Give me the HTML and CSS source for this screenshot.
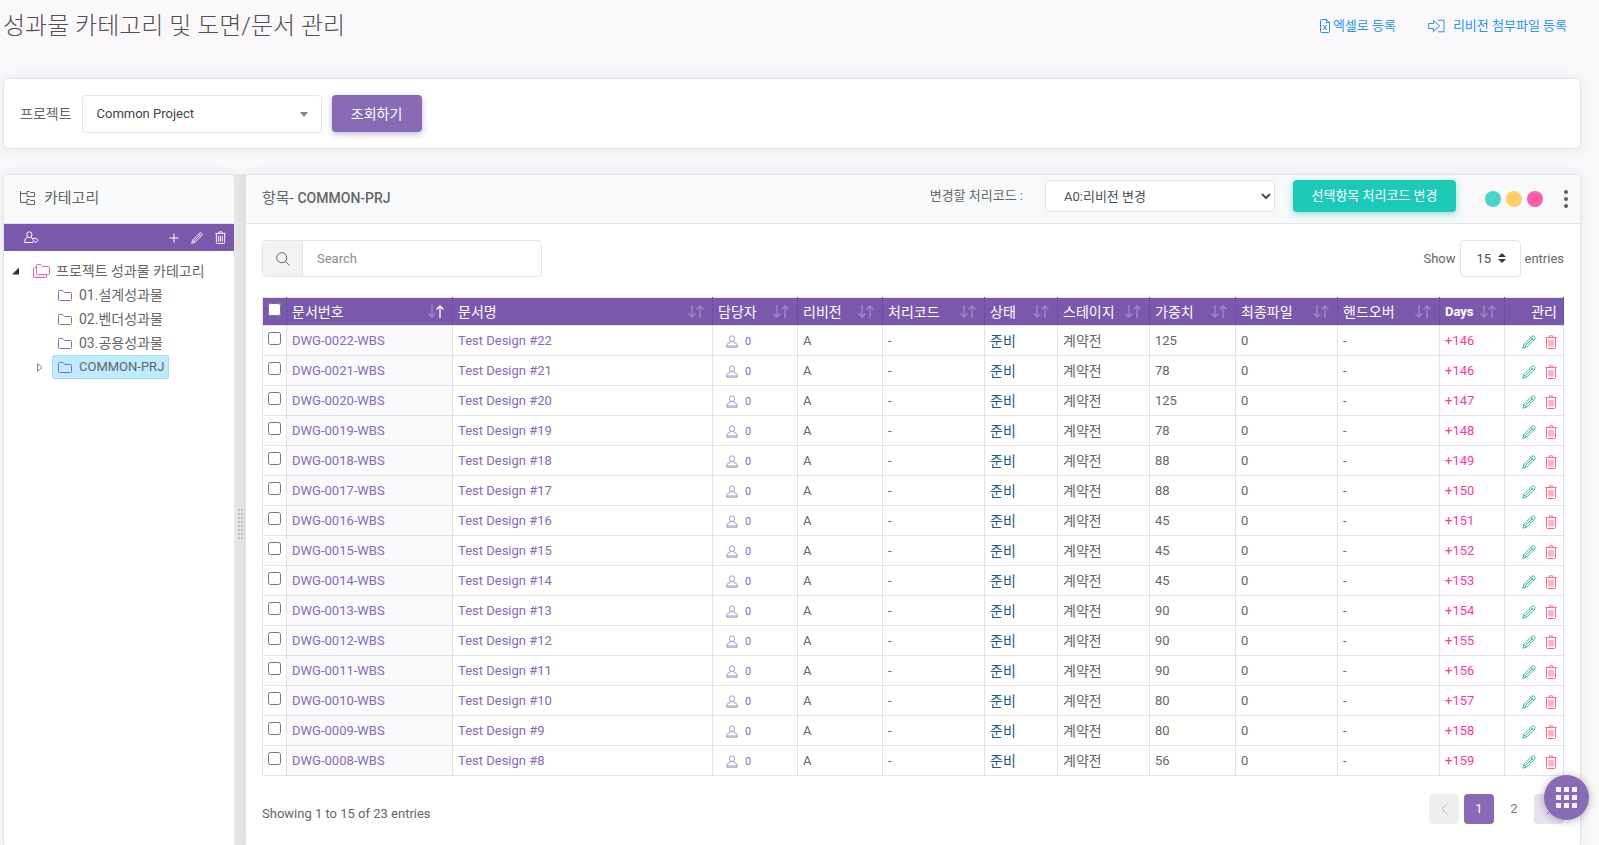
FILE: index.html
```html
<!DOCTYPE html>
<html lang="ko">
<head>
    <meta charset="UTF-8">
    <meta name="viewport" content="width=device-width, initial-scale=1.0">
    <title>성과물 카테고리 및 도면/문서 관리</title>
    <link rel="stylesheet" href="styles.css">
</head>
<body>
    <!-- Shared icons -->
    <svg class="sprite" aria-hidden="true">
        <symbol id="i-excel" viewBox="0 0 10 14"><path d="M1.5 .5H6.5L9.500 3.500V12.500Q9.500 13.500 8.500 13.500H1.500Q.5 13.500 .5 12.500V1.500Q.5 .5 1.500 .5ZM6.500 .5V3.500H9.500M3.300 6L6.700 11M6.700 6L3.300 11"/></symbol>
        <symbol id="i-import" viewBox="0 0 17 14"><path d="M.7 4.500H5.500V1.500L11.500 7L5.500 12.500V9.500H.7ZM10 1.200H16V12.800H10"/></symbol>
        <symbol id="i-tree" viewBox="0 0 16 16"><path d="M.5 1V12.500H7M.5 3.500H7M7 1.500H9.500L10.500 2.500H14.500V6.500H7ZM7 9.500H9.500L10.500 10.500H14.500V14.500H7Z"/></symbol>
        <symbol id="i-user" viewBox="0 0 12 13"><path d="M6 .8A2.600 2.900 0 0 1 6 6.600A2.600 2.900 0 0 1 6 .8ZM4.200 6L4 7.500L1.500 8.600Q.8 9.500 .8 11H11.200Q11.200 9.500 10.500 8.600L8 7.500L7.800 6M.8 11V12.200H11.200V11"/></symbol>
        <symbol id="i-user-tag" viewBox="0 0 15 13"><path d="M5.300 .8A2.600 2.900 0 0 1 5.300 6.600A2.600 2.900 0 0 1 5.300 .8ZM3.500 6.300L1.500 7.600Q.8 8.500 .8 11.500H9M7 6.500L8.500 7.300M8.500 7.300H12L14.200 9.300L12 11.500L9.500 10.300Z"/></symbol>
        <symbol id="i-plus" viewBox="0 0 10 10"><path d="M5 .5V9.500M.5 5H9.500"/></symbol>
        <symbol id="i-pencil" viewBox="0 0 14 14"><path d="M.8 13.200L1.800 9.500L10 1.300Q11.300 .3 12.500 1.500Q13.700 2.700 12.700 4L4.500 12.200ZM1.800 9.500L4.500 12.200M3.200 10.800L11 3M8.800 2.500L11.500 5.200"/></symbol>
        <symbol id="i-trash" viewBox="0 0 12 14"><path d="M.3 2.500H11.700M3.700 2.500L4.500 .8H7.500L8.300 2.500M1.500 2.500V12.500Q1.500 13.500 2.500 13.500H9.500Q10.500 13.500 10.500 12.500V2.500M4 5V11.500M6 5V11.500M8 5V11.500"/></symbol>
        <symbol id="i-folder" viewBox="0 0 14 11"><path d="M.5 1.500Q.5 .5 1.500 .5H4.800L6.500 2.500H12.500Q13.500 2.500 13.500 3.500V9.500Q13.500 10.500 12.500 10.500H1.500Q.5 10.500 .5 9.500Z"/></symbol>
        <symbol id="i-folders" viewBox="0 0 17 14"><path d="M3.500 1.500Q3.500 .5 4.500 .5H7.800L9.500 2.500H15.500Q16.500 2.500 16.500 3.500V9.500Q16.500 10.500 15.500 10.500H4.500Q3.500 10.500 3.500 9.500ZM3.500 3.500H1.500Q.5 3.500 .5 4.500V12.500Q.5 13.500 1.500 13.500H12.500Q13.500 13.500 13.500 12.500V10.500"/></symbol>
        <symbol id="i-search" viewBox="0 0 14 14"><circle cx="5.700" cy="5.700" r="5"/><path d="M9.300 9.300L13.500 13.500"/></symbol>
        <symbol id="i-down" viewBox="0 0 8 13"><path d="M4 0V12M.5 8.500L4 12L7.500 8.500"/></symbol>
        <symbol id="i-up" viewBox="0 0 8 13"><path d="M4 13V1M.5 4.500L4 1L7.500 4.500"/></symbol>
        <symbol id="i-left" viewBox="0 0 7 12"><path d="M6.500 .5L1 6L6.500 11.500"/></symbol>
        <symbol id="i-right" viewBox="0 0 7 12"><path d="M.5 .5L6 6L.5 11.500"/></symbol>
    </svg>

    <header class="page-header">
        <h1>성과물 카테고리 및 도면/문서 관리</h1>
        <nav class="page-links">
            <a href="#"><svg class="icon" width="10" height="14"><use href="#i-excel"/></svg>엑셀로 등록</a>
            <a href="#" class="wide"><svg class="icon" width="17" height="14"><use href="#i-import"/></svg>리비전 첨부파일 등록</a>
        </nav>
    </header>

    <form class="card filter">
        <label for="project">프로젝트</label>
        <span class="project-select">
            <select id="project"><option>Common Project</option></select>
        </span>
        <button type="button" class="btn btn-primary">조회하기</button>
    </form>

    <main class="panels">
        <section class="card category">
            <div class="card-head">
                <svg class="icon" width="16" height="16"><use href="#i-tree"/></svg>
                <h2>카테고리</h2>
            </div>
            <div class="toolbar">
                <button type="button" class="icon-btn first" aria-label="담당자 지정"><svg class="icon" width="15" height="13"><use href="#i-user-tag"/></svg></button>
                <button type="button" class="icon-btn" aria-label="추가"><svg class="icon" width="10" height="10"><use href="#i-plus"/></svg></button>
                <button type="button" class="icon-btn" aria-label="수정"><svg class="icon" width="12" height="12"><use href="#i-pencil"/></svg></button>
                <button type="button" class="icon-btn" aria-label="삭제"><svg class="icon" width="11" height="13"><use href="#i-trash"/></svg></button>
            </div>
            <ul class="tree">
                <li>
                    <div class="node root"><span class="arrow open"></span><a href="#"><svg class="icon" width="17" height="14"><use href="#i-folders"/></svg>프로젝트 성과물 카테고리</a></div>
                    <ul>
                        <li class="node"><a href="#"><svg class="icon" width="14" height="11"><use href="#i-folder"/></svg>01.설계성과물</a></li>
                        <li class="node"><a href="#"><svg class="icon" width="14" height="11"><use href="#i-folder"/></svg>02.벤더성과물</a></li>
                        <li class="node"><a href="#"><svg class="icon" width="14" height="11"><use href="#i-folder"/></svg>03.공용성과물</a></li>
                        <li class="node"><svg class="arrow closed" width="6" height="9" viewBox="0 0 6 9"><path d="M.5 .7L5 4.500L.5 8.300Z"/></svg><a href="#" class="selected"><svg class="icon" width="14" height="11"><use href="#i-folder"/></svg>COMMON-PRJ</a></li>
                    </ul>
                </li>
            </ul>
        </section>

        <div class="splitter"><span></span></div>

        <section class="card items">
            <div class="card-head">
                <h2>항목- <b>COMMON-PRJ</b></h2>
                <div class="head-tools">
                    <label for="code">변경할 처리코드 :</label>
                    <select id="code" class="code-select"><option>A0:리비전 변경</option></select>
                    <button type="button" class="btn btn-success">선택항목 처리코드 변경</button>
                    <span class="dots">
                        <button type="button" class="dot teal" aria-label="접기"></button>
                        <button type="button" class="dot yellow" aria-label="전체화면"></button>
                        <button type="button" class="dot pink" aria-label="닫기"></button>
                    </span>
                    <button type="button" class="kebab" aria-label="더보기"><i></i><i></i><i></i></button>
                </div>
            </div>
            <div class="card-body">
                <div class="table-tools">
                    <div class="search">
                        <label for="search" aria-label="Search"><svg class="icon" width="14" height="14"><use href="#i-search"/></svg></label>
                        <input type="text" id="search" placeholder="Search">
                    </div>
                    <div class="length">
                        <label for="length">Show</label>
                        <span class="length-select"><select id="length"><option>15</option></select></span>
                        entries
                    </div>
                </div>

                <table>
                    <colgroup>
                        <col class="c-check"><col class="c-no"><col><col class="c-user"><col class="c-user"><col class="c-mid">
                        <col class="c-state"><col class="c-stage"><col class="c-weight"><col class="c-mid"><col class="c-mid"><col class="c-days"><col class="c-act">
                    </colgroup>
                    <thead><tr id="heads"></tr></thead>
                    <tbody id="rows"></tbody>
                </table>

                <div class="table-foot">
                    <span>Showing 1 to 15 of 23 entries</span>
                    <nav class="pages">
                        <button type="button" disabled aria-label="이전"><svg class="icon" width="7" height="12"><use href="#i-left"/></svg></button>
                        <button type="button" class="active">1</button>
                        <button type="button">2</button>
                        <button type="button" class="next" aria-label="다음"><svg class="icon" width="7" height="12"><use href="#i-right"/></svg></button>
                    </nav>
                </div>
            </div>
        </section>
    </main>

    <button type="button" class="fab" aria-label="바로가기"><i></i><i></i><i></i><i></i><i></i><i></i><i></i><i></i><i></i></button>

    <script src="script.js"></script>
</body>
</html>
```

FILE: styles.css
```css
* {
    box-sizing: border-box;
}
body {
    display: flex;
    flex-direction: column;
    min-height: 100vh;
    margin: 0;
    padding: 0 18px 0 3px;
    background-color: #faf8fb;
    color: #666;
    font-family: Roboto, "Noto Sans CJK KR", sans-serif;
    font-size: 13px;
    line-height: 20px;
}
h1, h2, ul {
    margin: 0;
    padding: 0;
    font-weight: 400;
    list-style: none;
}
a {
    color: #886ab5;
    text-decoration: none;
}
button, input, select {
    font: inherit;
    color: inherit;
}
button {
    padding: 0;
    border: none;
    background: none;
    cursor: pointer;
}
.sprite {
    position: absolute;
    width: 0;
    height: 0;
}
.icon {
    flex: none;
    fill: none;
    stroke: currentColor;
    stroke-width: 1;
}

/* Page header */
.page-header {
    display: flex;
    justify-content: space-between;
    height: 78px;
    padding-top: 11px;
}
.page-header h1 {
    color: #505050;
    font-size: 24px;
    font-weight: 300;
    line-height: 30px;
}
.page-links {
    display: flex;
    gap: 32px;
    padding: 5px 14px 0 0;
    font-size: 13px;
}
.page-links a {
    display: flex;
    align-items: center;
    gap: 3px;
    height: 20px;
    color: #2196f3;
}
.page-links .wide {
    gap: 8px;
}

/* Cards */
.card {
    border: 1px solid #e5e4e7;
    border-radius: 4px;
    background-color: #fff;
    box-shadow: 0 0 13px rgba(74, 53, 107, 0.08);
}
.card-head {
    display: flex;
    align-items: center;
    height: 49px;
    padding: 0 16px 3px;
    border-bottom: 1px solid #e5e5e7;
    border-radius: 4px 4px 0 0;
    background-color: #f7f9fa;
}
.card-head h2 {
    font-size: 15px;
}
.card-head b {
    font-size: 14px;
    font-weight: 500;
}
.btn {
    border-radius: 4px;
    color: #fff;
}
.btn-primary {
    width: 90px;
    height: 37px;
    background-color: #886ab5;
    box-shadow: 0 2px 6px rgba(136, 106, 181, 0.5);
    font-size: 14px;
}
.btn-success {
    width: 163px;
    height: 32px;
    background-color: #1dc9b7;
    box-shadow: 0 2px 6px rgba(29, 201, 183, 0.5);
}

.filter {
    display: flex;
    align-items: center;
    height: 71px;
    margin-bottom: 25px;
    padding: 0 16px;
}
.filter label {
    font-size: 14px;
}
.project-select {
    position: relative;
    width: 240px;
    margin: 0 10px;
}
.project-select select {
    width: 100%;
    height: 38px;
    padding: 0 14px;
    border: 1px solid #e5e5e5;
    border-radius: 4px;
    background-color: #fff;
    color: #444;
    appearance: none;
}
.project-select::after {
    position: absolute;
    top: 17px;
    right: 14px;
    border: 4px solid transparent;
    border-top: 5px solid #888;
    border-bottom: none;
    content: "";
}

/* Category tree */
.panels {
    display: flex;
    flex: 1;
}
.panels .card {
    border-bottom: none;
    border-radius: 4px 4px 0 0;
}
.category {
    width: 231px;
    border-right: none;
}
.category .card-head {
    gap: 8px;
}
.toolbar {
    display: flex;
    align-items: center;
    gap: 12px;
    height: 27px;
    padding: 0 8px 0 20px;
    background-color: #7a59ad;
    color: #fff;
}
.icon-btn {
    display: flex;
    color: inherit;
}
.icon-btn.first {
    margin-right: auto;
}
.tree {
    padding: 8px 0 0 8px;
}
.tree ul {
    padding-left: 24px;
}
.node {
    display: flex;
    align-items: center;
    height: 24px;
    padding-left: 16px;
}
.node.root {
    padding-left: 0;
}
.node a {
    display: flex;
    align-items: center;
    gap: 7px;
    height: 24px;
    padding: 0 4px 0 5px;
    border: 1px solid transparent;
    color: #666;
    font-size: 14px;
}
.node a .icon {
    color: #886ab5;
}
.node.root a {
    gap: 6px;
    padding-left: 13px;
}
.node.root .icon {
    color: #fd5ca6;
}
.node a.selected {
    border-color: #a5dcf2;
    border-radius: 2px;
    background-color: #beebff;
    font-size: 13px;
}
.arrow.open {
    width: 7px;
    height: 7px;
    background-color: #333;
    clip-path: polygon(100% 0, 100% 100%, 0 100%);
}
.arrow.closed {
    margin: 0 9px 0 -15px;
    fill: none;
    stroke: #888;
}
.splitter {
    display: flex;
    align-items: center;
    justify-content: center;
    width: 12px;
    padding-top: 28px;
    background-color: #e6e6e6;
}
.splitter span {
    width: 5px;
    height: 30px;
    background-image: linear-gradient(to right, transparent 2px, #e6e6e6 2px, #e6e6e6 3px, transparent 3px), repeating-linear-gradient(#c4c4c4 0, #c4c4c4 2px, #e6e6e6 2px, #e6e6e6 4px);
}

/* Item panel */
.items {
    flex: 1;
    min-width: 0;
}
.panels .items {
    border-left: none;
}
.items .card-head {
    justify-content: space-between;
    padding: 0 8px 3px 16px;
}
.head-tools {
    display: flex;
    align-items: center;
    margin-top: -3px;
    font-size: 13px;
}
.head-tools label {
    margin-right: 22px;
}
.code-select {
    width: 230px;
    height: 32px;
    margin-right: 18px;
    padding-left: 14px;
    border: 1px solid #e5e5e5;
    border-radius: 4px;
    background-color: #fff;
    color: #495057;
}
.dots {
    display: flex;
    gap: 5px;
    margin: 6px 17px 0 29px;
}
.dot {
    width: 16px;
    height: 16px;
    border-radius: 50%;
}
.teal {
    background-color: #4ad4c5;
}
.yellow {
    background-color: #ffce65;
}
.pink {
    background-color: #fd5ca6;
}
.kebab {
    display: flex;
    flex-direction: column;
    gap: 3px;
    padding: 6px 4px 0;
}
.kebab i {
    width: 4px;
    height: 4px;
    border-radius: 50%;
    background-color: #5d5d5d;
}
.card-body {
    padding: 16px 16px 20px;
}
.table-tools {
    display: flex;
    justify-content: space-between;
    margin-bottom: 20px;
}
.search {
    display: flex;
    width: 280px;
    height: 37px;
    border: 1px solid #e5e5e5;
    border-radius: 4px;
}
.search label {
    display: flex;
    align-items: center;
    justify-content: center;
    width: 40px;
    border-right: 1px solid #e5e5e5;
    background-color: #f3f3f3;
}
.search input {
    flex: 1;
    min-width: 0;
    padding: 0 14px;
    border: none;
    border-radius: 4px;
    background: none;
}
.search input::placeholder {
    color: #868e96;
}
.length {
    display: flex;
    align-items: center;
    gap: 4px;
}
.length-select {
    position: relative;
}
.length-select select {
    width: 61px;
    height: 37px;
    padding: 0 16px;
    border: 1px solid #e5e5e5;
    border-radius: 4px;
    background-color: #fff;
    color: #495057;
    appearance: none;
}
.length-select::before, .length-select::after {
    position: absolute;
    right: 15px;
    border: 4px solid transparent;
    content: "";
}
.length-select::before {
    top: 13px;
    border-top: none;
    border-bottom-color: #343a40;
}
.length-select::after {
    top: 19px;
    border-bottom: none;
    border-top-color: #343a40;
}

/* Table */
table {
    width: 100%;
    border-collapse: collapse;
    table-layout: fixed;
}
.c-check { width: 24px; }
.c-no { width: 166px; }
.c-user { width: 85px; }
.c-mid { width: 102px; }
.c-state { width: 73px; }
.c-stage { width: 92px; }
.c-weight { width: 86px; }
.c-days { width: 65px; }
.c-act { width: 59px; }
th, td {
    height: 30px;
    padding: 0 5px;
    border: 1px solid #e3e3e5;
    text-align: left;
    white-space: nowrap;
}
th {
    height: 28px;
    border-color: #e3e3e5 #6e4e9e;
    background-color: #7a59ad;
    color: #fff;
    font-size: 14px;
    font-weight: 400;
}
th:first-child {
    border-left-color: #e3e3e5;
}
th div {
    display: flex;
    align-items: center;
    justify-content: space-between;
}
.sort {
    display: flex;
    padding-right: 3px;
    opacity: 0.3;
}
.sort.asc {
    opacity: 1;
}
.sort.asc .icon:first-child {
    opacity: 0.3;
}
.sort .icon {
    stroke-width: 1.3;
}
th:nth-child(12) {
    font-size: 13px;
    font-weight: 700;
}
th:last-child, td:last-child {
    padding-right: 6px;
    text-align: right;
}
th:last-child div {
    justify-content: flex-end;
}
td:nth-child(2) {
    background-color: #fafafc;
}
input[type="checkbox"] {
    display: block;
    width: 13px;
    height: 13px;
    margin: 0 0 4px;
}
.user {
    display: flex;
    align-items: center;
    gap: 7px;
    padding: 2px 0 0 8px;
    font-size: 11px;
}
.user .icon {
    opacity: 0.7;
}
.state, .stage {
    font-size: 14px;
}
.state {
    color: #1d5987;
}
.late {
    color: #fd3995;
}
.actions {
    display: flex;
    justify-content: flex-end;
    gap: 9px;
    padding-top: 2px;
}
.actions button {
    display: flex;
}
.edit {
    color: #37b8a8;
}
.remove {
    color: #fd6a86;
}

.table-foot {
    display: flex;
    align-items: flex-end;
    justify-content: space-between;
    margin-top: 18px;
}
.pages {
    display: flex;
    gap: 5px;
}
.pages button {
    display: flex;
    align-items: center;
    justify-content: center;
    width: 30px;
    height: 30px;
    border-radius: 4px;
    color: #886ab5;
}
.pages button:disabled {
    background-color: #eee;
    color: #bbb;
}
.pages .active {
    background-color: #886ab5;
    color: #fff;
}
.pages .next {
    background-color: #e7e1f0;
}

.fab {
    position: fixed;
    right: 10px;
    bottom: 25px;
    display: grid;
    grid-template-columns: repeat(3, 5px);
    gap: 3px;
    place-content: center;
    width: 45px;
    height: 45px;
    border-radius: 50%;
    background-color: #886ab5;
    box-shadow: 0 1px 8px rgba(0, 0, 0, 0.3);
}
.fab i {
    height: 5px;
    background-color: #f2eff6;
}
```

FILE: script.js
```js
const heads = ["문서번호", "문서명", "담당자", "리비전", "처리코드", "상태", "스테이지", "가중치", "최종파일", "핸드오버", "Days"];

// [number, weight, days]
const docs = [
    [22, 125, 146], [21, 78, 146], [20, 125, 147], [19, 78, 148], [18, 88, 149],
    [17, 88, 150], [16, 45, 151], [15, 45, 152], [14, 45, 153], [13, 90, 154],
    [12, 90, 155], [11, 90, 156], [10, 80, 157], [9, 80, 158], [8, 56, 159]
];

function icon(name, width, height) {
    return `<svg class="icon" width="${width}" height="${height}"><use href="#i-${name}"/></svg>`;
}

document.getElementById("heads").innerHTML =
    `<th><input type="checkbox" aria-label="전체 선택"></th>` +
    heads.map((text, i) => `<th><div>${text}<span class="sort ${i === 0 ? "asc" : ""}">${icon("down", 8, 13)}${icon("up", 8, 13)}</span></div></th>`).join("") +
    `<th><div>관리</div></th>`;

document.getElementById("rows").innerHTML = docs.map(([no, weight, days]) => {
    const code = `DWG-${String(no).padStart(4, "0")}-WBS`;
    return `<tr>
        <td><input type="checkbox" aria-label="${code}"></td>
        <td><a href="#">${code}</a></td>
        <td><a href="#">Test Design #${no}</a></td>
        <td><a href="#" class="user">${icon("user", 12, 13)}0</a></td>
        <td>A</td>
        <td>-</td>
        <td class="state">준비</td>
        <td class="stage">계약전</td>
        <td>${weight}</td>
        <td>0</td>
        <td>-</td>
        <td class="late">+${days}</td>
        <td><div class="actions">
            <button type="button" class="edit" aria-label="수정">${icon("pencil", 14, 14)}</button>
            <button type="button" class="remove" aria-label="삭제">${icon("trash", 12, 14)}</button>
        </div></td>
    </tr>`;
}).join("");
```
